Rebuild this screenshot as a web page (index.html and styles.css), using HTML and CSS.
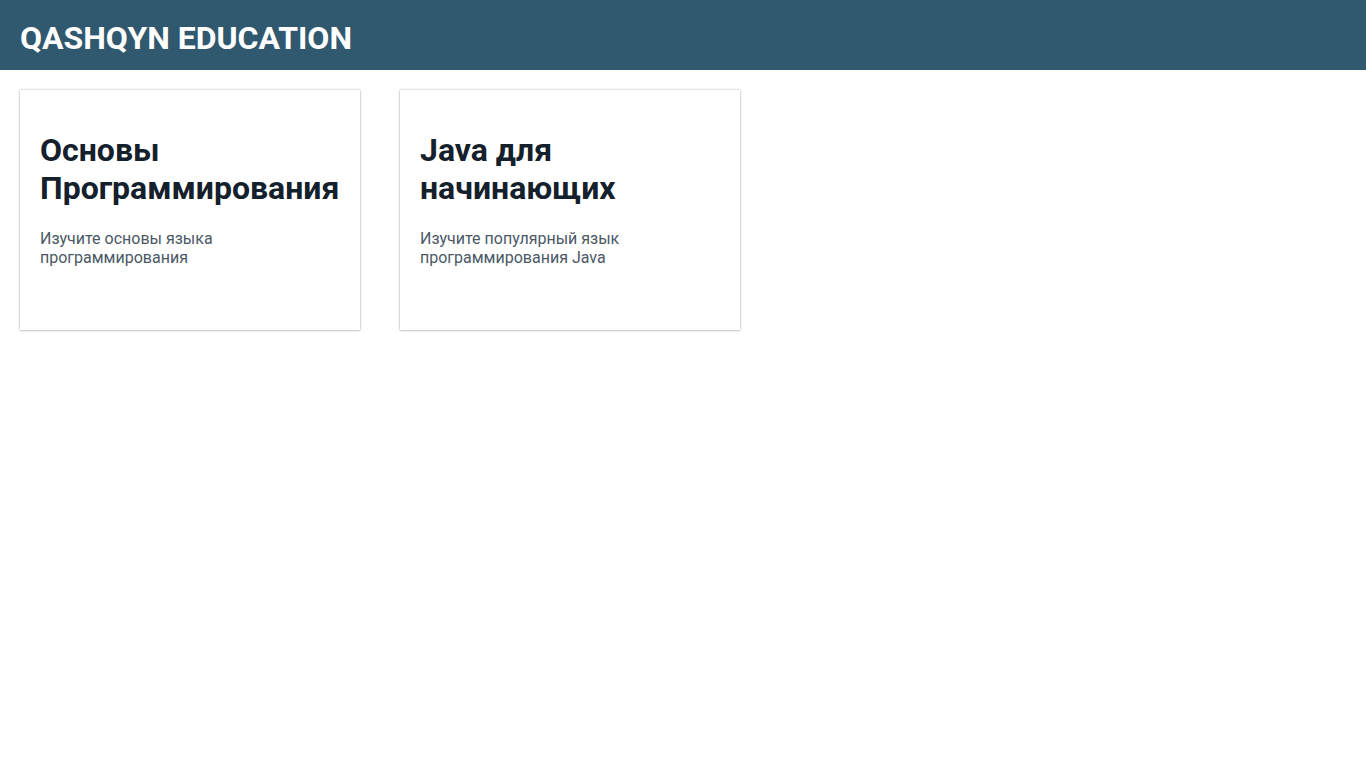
FILE: index.html
```html
<!DOCTYPE html>
<html lang="ru">
<head>
<meta charset="utf-8">
<title>QASHQYN EDUCATION</title>
<link rel="stylesheet" href="styles.css">
</head>
<body>
<header class="topbar">
  <h1 class="brand">QASHQYN EDUCATION</h1>
</header>
<main class="courses">
  <article class="card">
    <h2 class="card-title">Основы Программирования</h2>
    <p class="card-text">Изучите основы языка программирования</p>
  </article>
  <article class="card">
    <h2 class="card-title">Java для начинающих</h2>
    <p class="card-text">Изучите популярный язык программирования Java</p>
  </article>
</main>
</body>
</html>
```
FILE: styles.css
```css
* { box-sizing: border-box; }
html, body { margin: 0; padding: 0; background: #fff; }
body { font-family: Roboto, "Noto Sans", Arial, sans-serif; }
.topbar {
  height: 70px;
  background: #30586e;
  display: flex;
  align-items: center;
  padding: 6px 20px 0;
}
.brand {
  margin: 0;
  color: #fff;
  font-size: 32px;
  font-weight: 700;
  line-height: 1;
}
.courses {
  display: flex;
  gap: 40px;
  padding: 20px;
  align-items: flex-start;
}
.card {
  width: 340px;
  height: 240px;
  padding: 41px 20px 20px;
  background: #fff;
  box-shadow: 0 0 2px rgba(0,0,0,0.35), 0 1px 2px rgba(0,0,0,0.12);
}
.card-title {
  margin: 0;
  font-size: 32px;
  line-height: 1.2;
  font-weight: 700;
  color: #14202b;
}
.card-text {
  margin: 21px 0 0;
  font-size: 16px;
  line-height: 1.2;
  color: #4b5866;
}
```
